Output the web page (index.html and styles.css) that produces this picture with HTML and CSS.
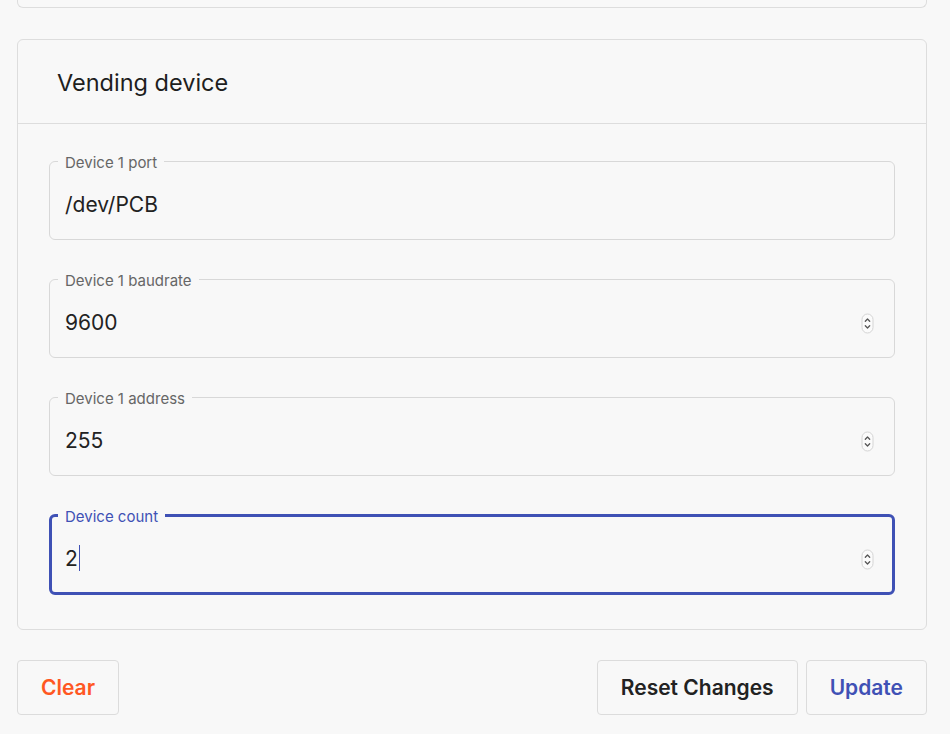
FILE: index.html
```html
<!DOCTYPE html>
<html>
<head>
<meta charset="utf-8">
<link rel="stylesheet" href="styles.css">
</head>
<body>
<div class="page">
  <div class="card card-prev"></div>

  <section class="card">
    <header class="card-header">Vending device</header>
    <div class="card-body">
      <fieldset class="field">
        <legend>Device 1 port</legend>
        <div class="field-row"><span class="value">/dev/PCB</span></div>
      </fieldset>

      <fieldset class="field">
        <legend>Device 1 baudrate</legend>
        <div class="field-row"><span class="value">9600</span>
          <svg class="spin" width="13" height="21" viewBox="0 0 13 21"><rect x="1" y="1" width="11" height="19" rx="5.5" fill="#fbfbfb" stroke="#d4d4d4"/><path d="M4.3 8.2 L6.5 6 L8.7 8.2" fill="none" stroke="#555" stroke-width="1.3" stroke-linecap="round" stroke-linejoin="round"/><path d="M4.3 12.8 L6.5 15 L8.7 12.8" fill="none" stroke="#555" stroke-width="1.3" stroke-linecap="round" stroke-linejoin="round"/></svg>
        </div>
      </fieldset>

      <fieldset class="field">
        <legend>Device 1 address</legend>
        <div class="field-row"><span class="value">255</span>
          <svg class="spin" width="13" height="21" viewBox="0 0 13 21"><rect x="1" y="1" width="11" height="19" rx="5.5" fill="#fbfbfb" stroke="#d4d4d4"/><path d="M4.3 8.2 L6.5 6 L8.7 8.2" fill="none" stroke="#555" stroke-width="1.3" stroke-linecap="round" stroke-linejoin="round"/><path d="M4.3 12.8 L6.5 15 L8.7 12.8" fill="none" stroke="#555" stroke-width="1.3" stroke-linecap="round" stroke-linejoin="round"/></svg>
        </div>
      </fieldset>

      <fieldset class="field field-focused">
        <legend>Device count</legend>
        <div class="field-row"><span class="value">2<span class="caret"></span></span>
          <svg class="spin" width="13" height="21" viewBox="0 0 13 21"><rect x="1" y="1" width="11" height="19" rx="5.5" fill="#fbfbfb" stroke="#d4d4d4"/><path d="M4.3 8.2 L6.5 6 L8.7 8.2" fill="none" stroke="#555" stroke-width="1.3" stroke-linecap="round" stroke-linejoin="round"/><path d="M4.3 12.8 L6.5 15 L8.7 12.8" fill="none" stroke="#555" stroke-width="1.3" stroke-linecap="round" stroke-linejoin="round"/></svg>
        </div>
      </fieldset>
    </div>
  </section>

  <div class="actions">
    <button class="btn btn-clear">Clear</button>
    <div class="actions-right">
      <button class="btn">Reset Changes</button>
      <button class="btn btn-update">Update</button>
    </div>
  </div>
</div>
</body>
</html>
```

FILE: styles.css
```css
html, body {
  margin: 0;
  padding: 0;
  background: #f8f8f8;
}

body {
  font-family: Inter, "Noto Sans", "Liberation Sans", sans-serif;
  color: #222;
  height: 734px;
  overflow: hidden;
}

.page {
  width: 910px;
  margin-left: 17px;
}

.card {
  border: 1px solid #dddddd;
  border-radius: 6px;
  background: #f8f8f8;
}

.card-prev {
  height: 7px;
  border-top: none;
  border-radius: 0 0 6px 6px;
  margin-bottom: 31px;
}

.card-header {
  height: 84px;
  padding-top: 2px;
  box-sizing: border-box;
  display: flex;
  align-items: center;
  padding-left: 39px;
  font-size: 23.5px;
  font-weight: 400;
  color: #1e1e1e;
  border-bottom: 1px solid #dddddd;
}

.card-body {
  padding: 27px 31px 34px 31px;
  display: flex;
  flex-direction: column;
  gap: 29px;
}

.field {
  margin: 0;
  padding: 0 20px 0 15px;
  border: 1px solid #d8d8d8;
  border-radius: 6px;
  min-width: 0;
}

.field legend {
  margin-left: -7px;
  padding: 4px 7px 0 7px;
  font-size: 15px;
  line-height: 16px;
  color: #666;
}

.field-row {
  height: 62px;
  padding-top: 2px;
  padding-bottom: 4px;
  display: flex;
  align-items: center;
  justify-content: space-between;
}

.value {
  font-size: 21px;
  color: #222;
  display: flex;
  align-items: center;
}

.spin {
  display: block;
  margin-top: 3px;
}

.field-focused {
  border: 3px solid #3f51b5;
  padding: 0 18px 0 13px;
}

.field-focused legend {
  color: #3f51b5;
}

.field-focused .field-row {
  height: 62px;
  padding-top: 2px;
  padding-bottom: 3px;
}

.caret {
  display: inline-block;
  width: 1.5px;
  height: 26px;
  background: #3f51b5;
  margin-left: 1px;
}

.actions {
  margin-top: 30px;
  display: flex;
  justify-content: space-between;
}

.actions-right {
  display: flex;
  gap: 8px;
}

.btn {
  height: 55px;
  padding: 0 23px;
  border: 1px solid #dcdcdc;
  border-radius: 4px;
  background: #f8f8f8;
  font-family: Inter, "Noto Sans", "Liberation Sans", sans-serif;
  font-size: 21px;
  font-weight: 600;
  color: #222;
}

.btn-clear {
  color: #ff5722;
}

.btn-update {
  color: #3f51b5;
}
```
